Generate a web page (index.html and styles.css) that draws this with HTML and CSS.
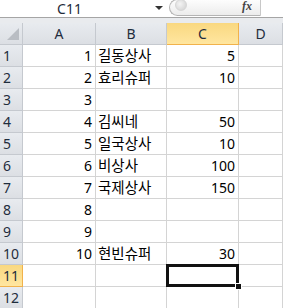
FILE: index.html
```html
<!DOCTYPE html>
<html lang="ko">
<head>
  <meta charset="UTF-8">
  <title>Sheet</title>
  <link rel="stylesheet" href="styles.css">
</head>
<body>

  <div id="formulaBar">
    <div class="name-box">C11</div>
    <div class="name-arrow"></div>
    <div class="fx-panel">
      <span class="knob"></span>
      <span class="fx">fx</span>
    </div>
    <div class="formula-input"></div>
  </div>
  <div class="bar-gap"></div>

  <div id="sheet">
    <div class="hd corner"><span class="tri"></span></div>
    <div class="hd col">A</div>
    <div class="hd col">B</div>
    <div class="hd col sel">C</div>
    <div class="hd col">D</div>

    <div class="hd row">1</div><div class="c num">1</div><div class="c">길동상사</div><div class="c num">5</div><div class="c"></div>
    <div class="hd row">2</div><div class="c num">2</div><div class="c">효리슈퍼</div><div class="c num">10</div><div class="c"></div>
    <div class="hd row">3</div><div class="c num">3</div><div class="c"></div><div class="c num"></div><div class="c"></div>
    <div class="hd row">4</div><div class="c num">4</div><div class="c">김씨네</div><div class="c num">50</div><div class="c"></div>
    <div class="hd row">5</div><div class="c num">5</div><div class="c">일국상사</div><div class="c num">10</div><div class="c"></div>
    <div class="hd row">6</div><div class="c num">6</div><div class="c">비상사</div><div class="c num">100</div><div class="c"></div>
    <div class="hd row">7</div><div class="c num">7</div><div class="c">국제상사</div><div class="c num">150</div><div class="c"></div>
    <div class="hd row">8</div><div class="c num">8</div><div class="c"></div><div class="c num"></div><div class="c"></div>
    <div class="hd row">9</div><div class="c num">9</div><div class="c"></div><div class="c num"></div><div class="c"></div>
    <div class="hd row">10</div><div class="c num">10</div><div class="c">현빈슈퍼</div><div class="c num">30</div><div class="c"></div>
    <div class="hd row sel">11</div><div class="c"></div><div class="c"></div><div class="c active"><span class="handle"></span></div><div class="c"></div>
    <div class="hd row">12</div><div class="c"></div><div class="c"></div><div class="c"></div><div class="c"></div>
  </div>

</body>
</html>
```

FILE: styles.css
```css
body {
  margin: 0;
  width: 283px;
  height: 308px;
  overflow: hidden;
  background: #fff;
  font-family: "Noto Sans", "Noto Sans CJK KR", sans-serif;
  color: #000;
}

#formulaBar {
  height: 17px;
  display: flex;
  border-bottom: 1px solid #a5a5a5;
  background: #fff;
}

.name-box {
  width: 139px;
  text-align: center;
  font-size: 14px;
  line-height: 17px;
  color: #1e2a3a;
}

.name-arrow {
  width: 0;
  height: 0;
  margin: 6px 0 0 16px;
  border-left: 4px solid transparent;
  border-right: 4px solid transparent;
  border-top: 4px solid #333;
}

.fx-panel {
  width: 92px;
  margin-left: 6px;
  margin-top: -1px;
  height: 17px;
  border: 1px solid #b4b4b4;
  border-right-color: #c8c8c8;
  border-radius: 9px 0 0 9px;
  background: linear-gradient(#fdfdfd, #ececec);
  display: flex;
  align-items: center;
  justify-content: space-between;
  padding: 0 8px 0 5px;
  box-sizing: border-box;
}

.knob {
  width: 10px;
  height: 10px;
  margin-top: -6px;
  border-radius: 50%;
  background: radial-gradient(circle at 40% 40%, #f4f4f4, #cfcfcf);
  border: 1px solid #d6d6d6;
}

.fx {
  font-family: "Liberation Serif", serif;
  font-style: italic;
  font-weight: bold;
  font-size: 12px;
  color: #444;
  margin-top: -2px;
}

.formula-input {
  flex: 1;
  background: #fff;
}

.bar-gap {
  height: 5px;
  background: #e9ebee;
}

#sheet {
  display: grid;
  grid-template-columns: 23px 73px 71px 72px 1fr;
  grid-auto-rows: 22px;
}

#sheet > div {
  box-sizing: border-box;
  border-right: 1px solid #d4d4d4;
  border-bottom: 1px solid #d4d4d4;
  font-size: 14px;
  line-height: 21px;
  white-space: nowrap;
  overflow: hidden;
}

#sheet > .hd {
  background: linear-gradient(#e8ebef, #dcdfe4);
  border-color: #c5c9cf;
  color: #1f2d3d;
}

.hd.col {
  text-align: center;
  font-size: 15px;
}

.hd.row {
  padding-left: 3px;
  font-size: 15px;
}

#sheet > .hd.sel {
  background: linear-gradient(#f9d880, #ffe6a0);
  border-color: #f1b24b;
}

.corner {
  position: relative;
}

.tri {
  position: absolute;
  right: 3px;
  bottom: 4px;
  width: 0;
  height: 0;
  border-left: 12px solid transparent;
  border-bottom: 12px solid #b9bdc3;
}

#sheet > .c {
  padding: 0 2px;
  font-size: 14.5px;
}

#sheet > .num {
  text-align: right;
  padding-right: 3px;
  font-size: 14px;
}

#sheet > .active {
  position: relative;
  overflow: visible;
}

.active::after {
  content: "";
  position: absolute;
  left: -1px;
  top: -1px;
  right: -1px;
  bottom: -1px;
  border: 3px solid #111;
}

.handle {
  position: absolute;
  right: -4px;
  bottom: -4px;
  width: 5px;
  height: 5px;
  background: #111;
  border: 1px solid #fff;
  z-index: 2;
}
```
